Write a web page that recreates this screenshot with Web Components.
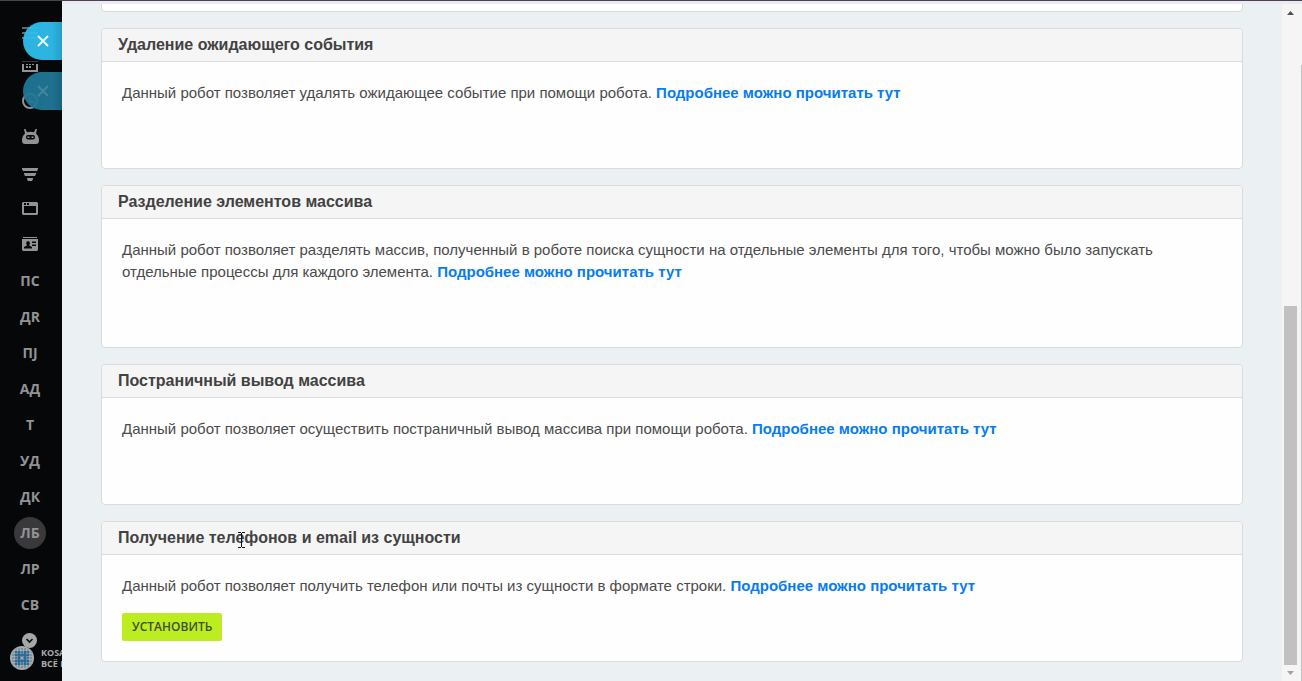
<!DOCTYPE html>
<html lang="ru">
<head>
<meta charset="utf-8">
<title>Роботы</title>
<style>
html, body { margin: 0; height: 100%; overflow: hidden; font-family: "Liberation Sans", Arial, sans-serif; }
</style>
</head>
<body>
<app-shell>
  <side-rail slot="rail">
    <rail-item icon="menu" label="Меню"></rail-item>
    <rail-item icon="calendar" label="Календарь"></rail-item>
    <rail-item icon="clock" label="Время"></rail-item>
    <rail-item icon="robot" label="Роботы"></rail-item>
    <rail-item icon="filter" label="CRM"></rail-item>
    <rail-item icon="window" label="Сайты"></rail-item>
    <rail-item icon="card" label="Контакты"></rail-item>
    <rail-item>ПС</rail-item>
    <rail-item>ДR</rail-item>
    <rail-item>ПJ</rail-item>
    <rail-item>АД</rail-item>
    <rail-item>Т</rail-item>
    <rail-item>УД</rail-item>
    <rail-item>ДК</rail-item>
    <rail-item active>ЛБ</rail-item>
    <rail-item>ЛР</rail-item>
    <rail-item>СВ</rail-item>
  </side-rail>
  <panel-close slot="close"></panel-close>
  <panel-close slot="close" dim></panel-close>
  <robot-card></robot-card>
  <robot-card heading="Удаление ожидающего события">Данный робот позволяет удалять ожидающее событие при помощи робота.</robot-card>
  <robot-card heading="Разделение элементов массива">Данный робот позволяет разделять массив, полученный в роботе поиска сущности на отдельные элементы для того, чтобы можно было запускать отдельные процессы для каждого элемента.</robot-card>
  <robot-card heading="Постраничный вывод массива">Данный робот позволяет осуществить постраничный вывод массива при помощи робота.</robot-card>
  <robot-card heading="Получение телефонов и email из сущности">Данный робот позволяет получить телефон или почты из сущности в формате строки.<install-button slot="action"></install-button></robot-card>
  <scroll-track slot="scroll"></scroll-track>
</app-shell>
<text-cursor></text-cursor>

<script>
class BaseElement extends HTMLElement {
  render(html) {
    if (!this.shadowRoot) this.attachShadow({ mode: 'open' });
    this.shadowRoot.innerHTML = html;
  }
}

customElements.define('app-shell', class extends BaseElement {
  connectedCallback() {
    this.render(`<style>
      :host { display: flex; flex-direction: column; height: 100vh; border-top: 1px solid #47444f; box-sizing: border-box; overflow: hidden; }
      .row { flex: 1; min-height: 0; display: flex; position: relative; }
      .closers { position: absolute; left: 23px; top: 21px; display: grid; gap: 12px; }
      .page { flex: 1; min-width: 0; display: flex; background: #ebf0f3; border-top: 3px solid #ece9f2; }
      main { flex: 1; min-width: 0; box-sizing: border-box; overflow: hidden; padding: 0 39px 19px; display: flex; flex-direction: column; justify-content: flex-end; gap: 16px; }
    </style>
    <div class="row">
      <slot name="rail"></slot>
      <div class="page"><main><slot></slot></main><slot name="scroll"></slot></div>
      <div class="closers"><slot name="close"></slot></div>
    </div>`);
  }
});

customElements.define('side-rail', class extends BaseElement {
  connectedCallback() {
    // Dot radius by distance from the centre, one quadrant mirrored to four.
    const radii = [
      [0, 1.7, 1.1, 0.8],
      [1.7, 1.9, 1.5, 0.7],
      [1.1, 1.5, 1.3, 0.5],
      [0.8, 0.7, 0.5, 0]
    ];
    let dots = '';
    for (let r = -3; r <= 3; r++) for (let c = -3; c <= 3; c++) {
      const s = radii[Math.abs(r)][Math.abs(c)];
      if (s) dots += `<circle cx="${12 + c * 3}" cy="${12 + r * 3}" r="${s}"/>`;
    }
    this.render(`<style>
      :host { flex: none; width: 62px; background: #060709; overflow: hidden; color: #929395; display: flex; flex-direction: column; }
      nav { display: flex; flex-direction: column; width: 60px; padding-top: 10px; }
      .brand { position: relative; display: flex; align-items: center; gap: 7px; padding: 23px 0 0 10px; }
      .brand > svg { flex: none; }
      .name { font: 700 9px/11px "Open Sans", sans-serif; color: #a9aaab; white-space: nowrap; }
      button { position: absolute; left: 22px; top: 10px; width: 15px; height: 15px; padding: 0; border: 0; border-radius: 50%; background: #a6a7a8; display: grid; place-items: center; }
    </style>
    <nav><slot></slot></nav>
    <div class="brand">
      <svg width="24" height="24" viewBox="0 0 24 24"><circle cx="12" cy="12" r="12" fill="#aaabac"/><g fill="#246b98">${dots}</g></svg>
      <div class="name">KOSA<br>ВСЁ П</div>
      <button aria-label="Развернуть"><svg width="9" height="7" viewBox="0 0 9 7"><path d="M1.5 2l3 3 3-3" fill="none" stroke="#111" stroke-width="1.7"/></svg></button>
    </div>`);
  }
});

const ICONS = {
  menu: '<path fill="#65676a" d="M2 8h16v2H2zM2 13h16v2H2zM2 18h16v2H2z"/>',
  calendar: '<path fill="currentColor" fill-rule="evenodd" d="M2 9h2v6h12V9h2v8H2z"/><path fill="currentColor" d="M6 9h2v1H6zM9 9h2v1H9zM12 9h2v1h-2zM6 11h2v2H6zM9 11h2v2H9z"/><path fill="#35373a" d="M2 6h16v1H2z"/>',
  clock: '<circle cx="10" cy="10" r="7" fill="none" stroke="currentColor" stroke-width="2"/><path d="M10 6v5h4" fill="none" stroke="currentColor" stroke-width="1.5"/>',
  robot: '<path fill="currentColor" fill-rule="evenodd" d="M4 2h1.500L7 5.200Q10.500 4.200 14 5.200L15.500 2H17l-1 4.500Q19 9 19 13.500 19 17 16 17H5Q2 17 2 13.500 2 9 5 6.500zM8 8Q6 8 6 10 6 12.500 8 12.500h5q2 0 2-2.500 0-2-2-2z"/><path d="M7.500 9.500h2V11h-2zM11.500 9.500h2V11h-2z" fill="currentColor"/>',
  filter: '<path fill="currentColor" d="M2 5h16v1l-1 2H3L2 6zM4 10h12v1l-1 2H5l-1-2zM7 15h6v1l-1 2H8l-1-2z"/>',
  window: '<path fill="currentColor" fill-rule="evenodd" d="M3 3h14l1 1v11l-1 1H3l-1-1V4zM4 7v7h12V7zM4 4v2h2V4zM7 4v2h2V4z"/>',
  card: '<path fill="currentColor" fill-rule="evenodd" d="M3 2h14v1H3zM2 4h16v11l-1 1H3l-1-1zM8 6Q6 6 6.200 8.500L7 10.500 4 12V13.500h8V12L9.200 10.500 10 8.500Q10 6 8 6zM12 6.500V8h4V6.500zM12 9.500V11h4V9.500z"/>'
};

customElements.define('rail-item', class extends BaseElement {
  connectedCallback() {
    const icon = this.getAttribute('icon');
    const label = this.getAttribute('label');
    this.render(`<style>
      :host { display: flex; justify-content: center; align-items: center; height: 36px; color: #929395; }
      a { display: grid; place-items: center; width: 32px; height: 32px; border-radius: 50%; color: inherit; text-decoration: none; font: 700 14px/20px "Open Sans", sans-serif; }
      :host([active]) a { background: #39393b; }
    </style>
    <a href="#" ${label ? `aria-label="${label}"` : ''}>${icon ? `<svg width="20" height="20" viewBox="0 0 20 20">${ICONS[icon]}</svg>` : '<slot></slot>'}</a>`);
  }
});

customElements.define('panel-close', class extends BaseElement {
  connectedCallback() {
    this.render(`<style>
      :host { display: block; --fill: linear-gradient(90deg, #2fbeeef0 75%, #27a8d5f0); }
      :host([dim]) { --fill: linear-gradient(90deg, #1f7898ee 75%, #1c6a87ee); }
      button { display: flex; align-items: center; width: 39px; height: 38px; padding: 0 0 0 14px; border: 0; border-radius: 19px 0 0 19px; background: var(--fill); }
      path { stroke: #e4f6fd; stroke-width: 2; }
      :host([dim]) path { stroke: #46869d; }
    </style>
    <button aria-label="Закрыть"><svg width="12" height="12" viewBox="0 0 12 12"><path d="M1 1l10 10M11 1L1 11"/></svg></button>`);
  }
});

customElements.define('robot-card', class extends BaseElement {
  connectedCallback() {
    const heading = this.getAttribute('heading');
    this.render(`<style>
      :host { flex: none; display: block; background: #fefefe; border: 1px solid #dadbdc; border-radius: 4px; overflow: hidden; color: #4b4b4b; }
      h2 { margin: 0; padding: 0 16px; background: #f5f5f5; border-bottom: 1px solid #dadbdc; font-size: 16px; line-height: 32px; font-weight: 700; color: #424242; }
      .body { padding: 20px; }
      p { margin: 0 0 16px; font-size: 15px; line-height: 22px; }
      a { color: #067bf2; font-weight: 700; text-decoration: none; }
      .action { min-height: 28px; }
    </style>
    ${heading ? `<h2>${heading}</h2>` : ''}
    <div class="body">
      ${heading ? '<p><slot></slot> <a href="#">Подробнее можно прочитать тут</a></p>' : ''}
      <div class="action"><slot name="action"></slot></div>
    </div>`);
  }
});

customElements.define('install-button', class extends BaseElement {
  connectedCallback() {
    this.render(`<style>
      :host { display: block; }
      button { display: block; height: 28px; padding: 0 10px; border: 0; border-radius: 2px; background: #bbed21; color: #434d28; font: 600 12px/28px "Open Sans", sans-serif; }
    </style><button>УСТАНОВИТЬ</button>`);
  }
});

customElements.define('scroll-track', class extends BaseElement {
  connectedCallback() {
    this.render(`<style>
      :host { flex: none; width: 20px; display: flex; background: #f5f5f5; }
      .track { width: 17px; display: flex; flex-direction: column; align-items: center; }
      svg { flex: none; display: block; }
      .space { flex: 285; }
      .thumb { flex: 359; width: 13px; background: #c1c1c1; }
      .outer { margin: 61px 0 0 auto; width: 1px; background: #c1c1c1; }
    </style>
    <div class="track">
      <svg width="17" height="17" viewBox="0 0 17 17"><path d="M5 11h7L8.500 7z" fill="#505050"/></svg>
      <div class="space"></div><div class="thumb"></div>
      <svg width="17" height="16" viewBox="0 0 17 16"><path d="M5 6h7l-3.500 4z" fill="#a3a3a3"/></svg>
    </div><div class="outer"></div>`);
  }
});

customElements.define('text-cursor', class extends BaseElement {
  connectedCallback() {
    this.render(`<style>
      :host { position: absolute; left: 238px; top: 532px; pointer-events: none; }
      svg { display: block; }
    </style>
    <svg width="7" height="16" viewBox="0 0 7 16" shape-rendering="crispEdges"><path d="M0 0h3v1H0zM4 0h3v1H4zM3 1h1v14H3zM0 15h3v1H0zM4 15h3v1H4z" fill="#111"/></svg>`);
  }
});
</script>
</body>
</html>
